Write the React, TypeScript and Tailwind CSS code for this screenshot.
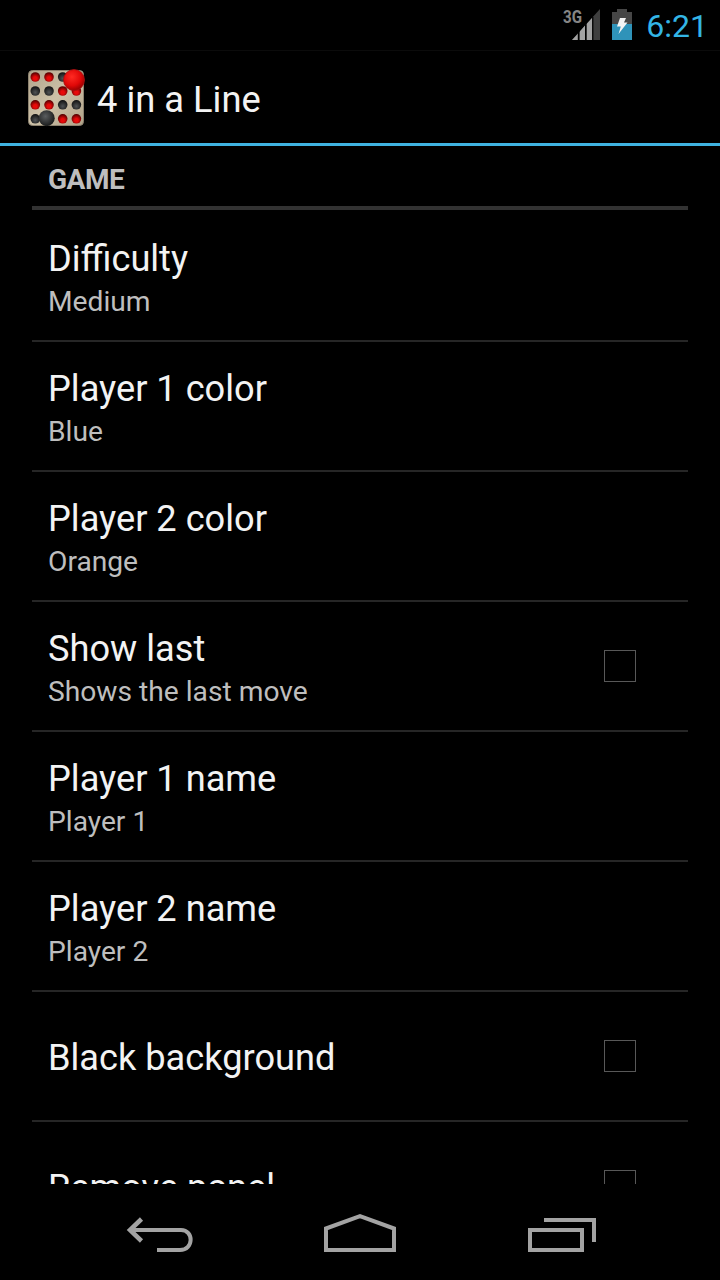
import React, { useState } from 'react';

interface Preference {
  key: string;
  title: string;
  summary?: string;
  checkbox?: boolean;
}

const preferences: Preference[] = [
  { key: 'difficulty', title: 'Difficulty', summary: 'Medium' },
  { key: 'player1Color', title: 'Player 1 color', summary: 'Blue' },
  { key: 'player2Color', title: 'Player 2 color', summary: 'Orange' },
  { key: 'showLast', title: 'Show last', summary: 'Shows the last move', checkbox: true },
  { key: 'player1Name', title: 'Player 1 name', summary: 'Player 1' },
  { key: 'player2Name', title: 'Player 2 name', summary: 'Player 2' },
  { key: 'blackBackground', title: 'Black background', checkbox: true },
  { key: 'removePanel', title: 'Remove panel', checkbox: true },
];

// One row per line of the board, r = red piece, b = black piece
const board = ['rrbr', 'bbrr', 'rrbb', 'bbrr'];
const boardX = [9.3, 23, 36.7, 50.4];
const boardY = [11, 25, 38.8, 52.8];

function AppIcon() {
  return (
    <svg width="62" height="62" viewBox="0 0 62 62">
      <defs>
        <linearGradient id="panel" x1="0" y1="0" x2="1" y2="1">
          <stop offset="0" stopColor="#b0a48c" />
          <stop offset="0.5" stopColor="#cdc1a8" />
          <stop offset="1" stopColor="#b0a288" />
        </linearGradient>
        <radialGradient id="redPiece" cx="0.5" cy="0.65" r="0.6">
          <stop offset="0.3" stopColor="#e80a0a" />
          <stop offset="1" stopColor="#5a0000" />
        </radialGradient>
        <radialGradient id="blackPiece" cx="0.5" cy="0.65" r="0.6">
          <stop offset="0" stopColor="#505355" />
          <stop offset="1" stopColor="#141414" />
        </radialGradient>
        <radialGradient id="redBall" cx="0.4" cy="0.35" r="0.7">
          <stop offset="0" stopColor="#ff2a22" />
          <stop offset="0.6" stopColor="#e00808" />
          <stop offset="1" stopColor="#8c0000" />
        </radialGradient>
        <radialGradient id="blackBall" cx="0.42" cy="0.38" r="0.65">
          <stop offset="0" stopColor="#5a5d5f" />
          <stop offset="1" stopColor="#171818" />
        </radialGradient>
      </defs>
      <rect x="2.5" y="4.5" width="55" height="55" rx="4" fill="url(#panel)" stroke="#8d8370" />
      {board.map((line, row) =>
        line.split('').map((piece, col) => (
          <circle
            key={`${row}-${col}`}
            cx={boardX[col]}
            cy={boardY[row]}
            r="4.8"
            fill={piece === 'r' ? 'url(#redPiece)' : 'url(#blackPiece)'}
          />
        ))
      )}
      <circle cx="48" cy="14" r="10.5" fill="url(#redBall)" stroke="#a81010" strokeWidth="0.8" />
      <circle cx="20.7" cy="52.2" r="8" fill="url(#blackBall)" />
    </svg>
  );
}

function StatusBar() {
  return (
    <div className="flex h-[50px] shrink-0 justify-end pr-3">
      <svg width="38" height="50" viewBox="0 0 38 50" className="mr-[11px]">
        <path d="M9 40 L37 9 V40 Z" fill="#3f3f3f" />
        <path d="M9 40 L15 33.4 V40 Z M17 40 V31.2 L22 25.6 V40 Z M24 40 V23.4 L29 17.9 V40 Z" fill="#a3a3a3" />
        <path d="M15.4 40 V32 M22.6 40 V25 M29.8 40 V17" stroke="#000" strokeWidth="1.2" />
        <text
          x="0"
          y="22.8"
          fontFamily="Roboto, sans-serif"
          fontSize="18"
          fontWeight="700"
          fill="#858585"
          textLength="19"
          lengthAdjust="spacingAndGlyphs"
        >
          3G
        </text>
      </svg>
      <svg width="20" height="50" viewBox="0 0 20 50" className="mr-[14px]">
        <path d="M0 12 H5 V9 H15 V12 H20 V24 H0 Z" fill="#464646" />
        <rect y="24" width="20" height="16" fill="#2f93b9" />
        <path d="M8 18 H14 L12 22.5 H15.5 L6.5 34 L8.8 26.5 H5 Z" fill="#f4f4f4" />
      </svg>
      <span className="text-[32px] leading-[52px] text-[#33b5e5]">6:21</span>
    </div>
  );
}

function Checkbox({ checked, onChange }: { checked: boolean; onChange: () => void }) {
  return (
    <button
      role="checkbox"
      aria-checked={checked}
      onClick={onChange}
      className="mr-[52px] flex h-8 w-8 items-center justify-center border border-[#585858] text-2xl text-[#33b5e5]"
    >
      {checked ? '✓' : null}
    </button>
  );
}

function NavigationBar() {
  return (
    <div className="flex h-24 shrink-0 items-center pl-[126px]">
      <svg width="68" height="96" viewBox="0 0 68 96" fill="none" stroke="#a3a3a3" strokeWidth="4">
        <path d="M15.5 35 L4 46 L15.5 57" strokeWidth="4.5" />
        <path d="M4 46 H55 C68 46 68 66 54 66 H31" />
      </svg>
      <svg width="72" height="96" viewBox="0 0 72 96" fill="none" stroke="#a3a3a3" strokeWidth="4" className="ml-[130px]">
        <path d="M2 66 V44.5 L36 32.2 L70 44.5 V66 Z" />
      </svg>
      <svg width="70" height="96" viewBox="0 0 70 96" fill="none" stroke="#a3a3a3" strokeWidth="4" className="ml-[132px]">
        <path d="M2 46 H54 V66 H2 Z" />
        <path d="M16 36 H66 V58" />
      </svg>
    </div>
  );
}

export default function App() {
  const [checked, setChecked] = useState<Record<string, boolean>>({});

  const toggle = (key: string) => setChecked((prev) => ({ ...prev, [key]: !prev[key] }));

  return (
    <div className="flex h-[1280px] w-[720px] flex-col overflow-hidden bg-black font-[Roboto,sans-serif] text-[#f3f3f3]">
      <StatusBar />

      {/* Action bar */}
      <header className="flex h-24 shrink-0 items-center border-t border-b-3 border-t-[#0b0b0b] border-b-[#3fb2e0] pl-[26px]">
        <AppIcon />
        <h1 className="ml-[9px] pt-1.5 text-[36.3px] leading-[42px]">4 in a Line</h1>
      </header>

      {/* Preference list */}
      <main className="min-h-0 flex-1 overflow-hidden px-8">
        <h2 className="mb-0.5 flex h-16 items-center border-b-4 border-[#323232] px-4 pt-2 text-[28px] font-bold tracking-[-0.5px] text-[#bebebe]">
          GAME
        </h2>
        {preferences.map((pref) => (
          <div key={pref.key} className="flex h-[130px] items-center justify-between border-b-2 border-[#262626] pl-4">
            <div className="pt-1">
              <div className="text-[36.2px] leading-[46px]">{pref.title}</div>
              {pref.summary && (
                <div className="mt-px -mb-px text-[28.2px] leading-[38px] text-[#bebebe]">{pref.summary}</div>
              )}
            </div>
            {pref.checkbox && (
              <Checkbox checked={!!checked[pref.key]} onChange={() => toggle(pref.key)} />
            )}
          </div>
        ))}
      </main>

      <NavigationBar />
    </div>
  );
}
